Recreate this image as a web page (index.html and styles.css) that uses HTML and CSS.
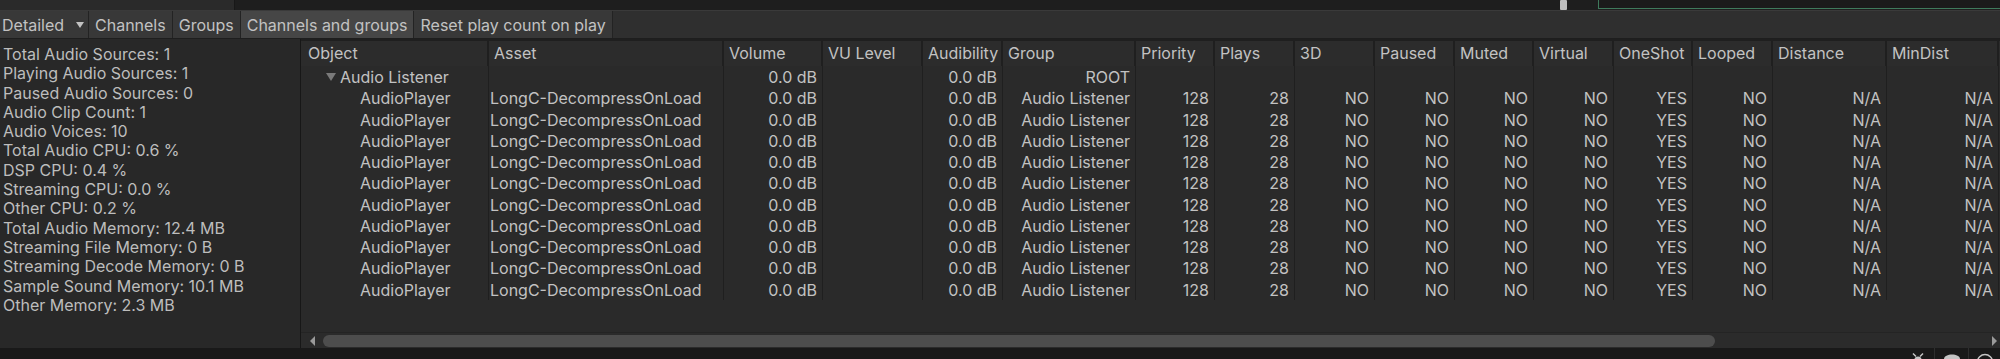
FILE: index.html
```html
<!DOCTYPE html>
<html>
<head>
<meta charset="utf-8">
<link rel="stylesheet" href="styles.css">
</head>
<body>
<div class="window">
  <div class="topstrip">
    <div class="top-left"></div>
    <div class="top-mid"><div class="top-thumb"></div></div>
    <div class="top-right"></div>
  </div>
  <div class="toolbar">
    <div class="tb-btn tb-drop">Detailed <span class="caret"></span></div>
    <div class="tb-btn">Channels</div>
    <div class="tb-btn">Groups</div>
    <div class="tb-btn tb-on">Channels and groups</div>
    <div class="tb-btn">Reset play count on play</div>
  </div>
  <div class="main">
    <div class="stats">
      <div>Total Audio Sources: 1</div>
      <div>Playing Audio Sources: 1</div>
      <div>Paused Audio Sources: 0</div>
      <div>Audio Clip Count: 1</div>
      <div>Audio Voices: 10</div>
      <div>Total Audio CPU: 0.6 %</div>
      <div>DSP CPU: 0.4 %</div>
      <div>Streaming CPU: 0.0 %</div>
      <div>Other CPU: 0.2 %</div>
      <div>Total Audio Memory: 12.4 MB</div>
      <div>Streaming File Memory: 0 B</div>
      <div>Streaming Decode Memory: 0 B</div>
      <div>Sample Sound Memory: 10.1 MB</div>
      <div>Other Memory: 2.3 MB</div>
    </div>
    <div class="tablewrap">
      <div class="grid">
        <div class="hc first">Object</div><div class="hc">Asset</div><div class="hc">Volume</div><div class="hc">VU Level</div><div class="hc">Audibility</div><div class="hc">Group</div><div class="hc">Priority</div><div class="hc">Plays</div><div class="hc">3D</div><div class="hc">Paused</div><div class="hc">Muted</div><div class="hc">Virtual</div><div class="hc">OneShot</div><div class="hc">Looped</div><div class="hc">Distance</div><div class="hc">MinDist</div><div class="hc"></div>

        <div class="c first obj-root"><span class="tri"></span>Audio Listener</div><div class="c l"></div><div class="c">0.0 dB</div><div class="c"></div><div class="c">0.0 dB</div><div class="c">ROOT</div><div class="c"></div><div class="c"></div><div class="c"></div><div class="c"></div><div class="c"></div><div class="c"></div><div class="c"></div><div class="c"></div><div class="c"></div><div class="c"></div><div class="c"></div>

        <div class="c first obj-child">AudioPlayer</div><div class="c l">LongC-DecompressOnLoad</div><div class="c">0.0 dB</div><div class="c"></div><div class="c">0.0 dB</div><div class="c">Audio Listener</div><div class="c">128</div><div class="c">28</div><div class="c">NO</div><div class="c">NO</div><div class="c">NO</div><div class="c">NO</div><div class="c">YES</div><div class="c">NO</div><div class="c">N/A</div><div class="c">N/A</div><div class="c"></div>

        <div class="c first obj-child">AudioPlayer</div><div class="c l">LongC-DecompressOnLoad</div><div class="c">0.0 dB</div><div class="c"></div><div class="c">0.0 dB</div><div class="c">Audio Listener</div><div class="c">128</div><div class="c">28</div><div class="c">NO</div><div class="c">NO</div><div class="c">NO</div><div class="c">NO</div><div class="c">YES</div><div class="c">NO</div><div class="c">N/A</div><div class="c">N/A</div><div class="c"></div>

        <div class="c first obj-child">AudioPlayer</div><div class="c l">LongC-DecompressOnLoad</div><div class="c">0.0 dB</div><div class="c"></div><div class="c">0.0 dB</div><div class="c">Audio Listener</div><div class="c">128</div><div class="c">28</div><div class="c">NO</div><div class="c">NO</div><div class="c">NO</div><div class="c">NO</div><div class="c">YES</div><div class="c">NO</div><div class="c">N/A</div><div class="c">N/A</div><div class="c"></div>

        <div class="c first obj-child">AudioPlayer</div><div class="c l">LongC-DecompressOnLoad</div><div class="c">0.0 dB</div><div class="c"></div><div class="c">0.0 dB</div><div class="c">Audio Listener</div><div class="c">128</div><div class="c">28</div><div class="c">NO</div><div class="c">NO</div><div class="c">NO</div><div class="c">NO</div><div class="c">YES</div><div class="c">NO</div><div class="c">N/A</div><div class="c">N/A</div><div class="c"></div>

        <div class="c first obj-child">AudioPlayer</div><div class="c l">LongC-DecompressOnLoad</div><div class="c">0.0 dB</div><div class="c"></div><div class="c">0.0 dB</div><div class="c">Audio Listener</div><div class="c">128</div><div class="c">28</div><div class="c">NO</div><div class="c">NO</div><div class="c">NO</div><div class="c">NO</div><div class="c">YES</div><div class="c">NO</div><div class="c">N/A</div><div class="c">N/A</div><div class="c"></div>

        <div class="c first obj-child">AudioPlayer</div><div class="c l">LongC-DecompressOnLoad</div><div class="c">0.0 dB</div><div class="c"></div><div class="c">0.0 dB</div><div class="c">Audio Listener</div><div class="c">128</div><div class="c">28</div><div class="c">NO</div><div class="c">NO</div><div class="c">NO</div><div class="c">NO</div><div class="c">YES</div><div class="c">NO</div><div class="c">N/A</div><div class="c">N/A</div><div class="c"></div>

        <div class="c first obj-child">AudioPlayer</div><div class="c l">LongC-DecompressOnLoad</div><div class="c">0.0 dB</div><div class="c"></div><div class="c">0.0 dB</div><div class="c">Audio Listener</div><div class="c">128</div><div class="c">28</div><div class="c">NO</div><div class="c">NO</div><div class="c">NO</div><div class="c">NO</div><div class="c">YES</div><div class="c">NO</div><div class="c">N/A</div><div class="c">N/A</div><div class="c"></div>

        <div class="c first obj-child">AudioPlayer</div><div class="c l">LongC-DecompressOnLoad</div><div class="c">0.0 dB</div><div class="c"></div><div class="c">0.0 dB</div><div class="c">Audio Listener</div><div class="c">128</div><div class="c">28</div><div class="c">NO</div><div class="c">NO</div><div class="c">NO</div><div class="c">NO</div><div class="c">YES</div><div class="c">NO</div><div class="c">N/A</div><div class="c">N/A</div><div class="c"></div>

        <div class="c first obj-child">AudioPlayer</div><div class="c l">LongC-DecompressOnLoad</div><div class="c">0.0 dB</div><div class="c"></div><div class="c">0.0 dB</div><div class="c">Audio Listener</div><div class="c">128</div><div class="c">28</div><div class="c">NO</div><div class="c">NO</div><div class="c">NO</div><div class="c">NO</div><div class="c">YES</div><div class="c">NO</div><div class="c">N/A</div><div class="c">N/A</div><div class="c"></div>

        <div class="c first obj-child">AudioPlayer</div><div class="c l">LongC-DecompressOnLoad</div><div class="c">0.0 dB</div><div class="c"></div><div class="c">0.0 dB</div><div class="c">Audio Listener</div><div class="c">128</div><div class="c">28</div><div class="c">NO</div><div class="c">NO</div><div class="c">NO</div><div class="c">NO</div><div class="c">YES</div><div class="c">NO</div><div class="c">N/A</div><div class="c">N/A</div><div class="c"></div>
      </div>
      <div class="hscroll">
        <span class="arr arr-l"></span>
        <div class="thumb"></div>
        <span class="arr arr-r"></span>
      </div>
    </div>
  </div>
  <div class="statusbar">
    <div class="st-icon">
      <svg width="16" height="11" viewBox="0 0 16 11"><path d="M3 5.5 L6 8.5 M13 5.5 L10 8.5" stroke="#c4c4c4" stroke-width="1.5" fill="none"/><ellipse cx="8" cy="11.5" rx="3.5" ry="3" fill="#c4c4c4"/></svg>
    </div>
    <div class="st-sep"></div>
    <div class="st-icon">
      <svg width="18" height="11" viewBox="0 0 18 11"><path d="M1 11 C1 8 5 6.5 9 6.5 C13 6.5 17 8 17 11 Z" fill="#c4c4c4"/></svg>
    </div>
    <div class="st-sep"></div>
    <div class="st-icon st-last">
      <svg width="18" height="11" viewBox="0 0 18 11"><circle cx="9" cy="14" r="7.5" stroke="#c4c4c4" stroke-width="1.5" fill="none"/></svg>
    </div>
  </div>
</div>
</body>
</html>
```
FILE: styles.css
```css
html, body {
  margin: 0;
  padding: 0;
  background: #282828;
}
.window {
  width: 2000px;
  height: 359px;
  overflow: hidden;
  display: flex;
  flex-direction: column;
  font-family: Inter, "Noto Sans", sans-serif;
  font-size: 16px;
  color: #c2c2c2;
}
.topstrip {
  height: 10px;
  flex: none;
  display: flex;
  border-bottom: 1px solid #3a3a3a;
  background: #1e1e1e;
}
.top-left {
  width: 234px;
  background: #2a2a2a;
  border-right: 1px solid #181818;
}
.top-mid {
  flex: 1;
  display: flex;
}
.top-thumb {
  width: 7px;
  height: 10px;
  margin-left: 1325px;
  background: #bdbdbd;
  border-radius: 1px;
}
.top-right {
  width: 401px;
  height: 8px;
  background: #1b1b1b;
  border-left: 1px solid #3f7a5c;
  border-bottom: 1px solid #3f7a5c;
}
.toolbar {
  height: 27px;
  flex: none;
  display: flex;
  background: #2f2f2f;
  border-bottom: 1px solid #1e1e1e;
}
.tb-btn {
  display: flex;
  align-items: center;
  padding: 0 6px 0 6px;
  background: #383838;
  border-right: 1px solid #232323;
  white-space: nowrap;
  line-height: 1;
}
.tb-drop {
  padding-left: 2px;
  width: 80px;
  gap: 12px;
}
.caret {
  width: 0;
  height: 0;
  border-left: 4px solid transparent;
  border-right: 4px solid transparent;
  border-top: 6px solid #c2c2c2;
}
.tb-on {
  background: #464646;
}
.main {
  flex: 1;
  display: flex;
  min-height: 0;
}
.stats {
  width: 297px;
  flex: none;
  padding: 6px 0 0 3px;
  line-height: 19.3px;
  color: #bdbdbd;
  background: #282828;
  border-right: 1px solid #171717;
  white-space: nowrap;
}
.tablewrap {
  flex: 1;
  min-width: 0;
  display: flex;
  flex-direction: column;
  background: #2a2a2a;
  border-top: 2px solid #1f1f1f;
}
.grid {
  display: grid;
  grid-template-columns: 187px 235px 99px 100px 80px 133px 79px 80px 80px 80px 79px 80px 79px 80px 114px 112px 60px;
  grid-template-rows: 25px;
  grid-auto-rows: 21.27px;
  flex: none;
}
.hc {
  background: #2c2c2c;
  border-left: 2px solid #1f1f1f;
  margin-left: -1px;
  padding-left: 5px;
  line-height: 25px;
  white-space: nowrap;
  overflow: hidden;
}
.hc.first {
  border-left: none;
  margin-left: 0;
  padding-left: 7px;
}
.c {
  border-left: 1px solid #1f1f1f;
  text-align: right;
  padding-right: 5px;
  line-height: 22px;
  white-space: nowrap;
  overflow: hidden;
}
.c.l {
  text-align: left;
  padding-left: 1px;
}
.c.first {
  border-left: none;
  text-align: left;
}
.obj-root {
  padding-left: 25px;
  display: flex;
  align-items: center;
  gap: 4px;
}
.tri {
  width: 0;
  height: 0;
  border-left: 5px solid transparent;
  border-right: 5px solid transparent;
  border-top: 8px solid #7a7a7a;
}
.obj-child {
  padding-left: 59px;
}
.hscroll {
  margin-top: auto;
  height: 15px;
  flex: none;
  display: flex;
  align-items: center;
  background: #2b2b2b;
  border-top: 1px solid #242424;
  padding: 0 3px 0 9px;
}
.arr {
  width: 0;
  height: 0;
  border-top: 5px solid transparent;
  border-bottom: 5px solid transparent;
}
.arr-l {
  border-right: 5px solid #9a9a9a;
  margin-right: 8px;
}
.arr-r {
  border-left: 5px solid #9a9a9a;
  margin-left: auto;
}
.thumb {
  width: 1392px;
  height: 12px;
  border-radius: 6px;
  background: #4d4d4d;
}
.statusbar {
  height: 11px;
  flex: none;
  background: #191919;
  display: flex;
  justify-content: flex-end;
  align-items: flex-start;
}
.st-icon {
  width: 33px;
  height: 11px;
  display: flex;
  justify-content: center;
}
.st-last {
  width: 31px;
}
.st-sep {
  width: 1px;
  height: 11px;
  background: #2e2e2e;
}
```
